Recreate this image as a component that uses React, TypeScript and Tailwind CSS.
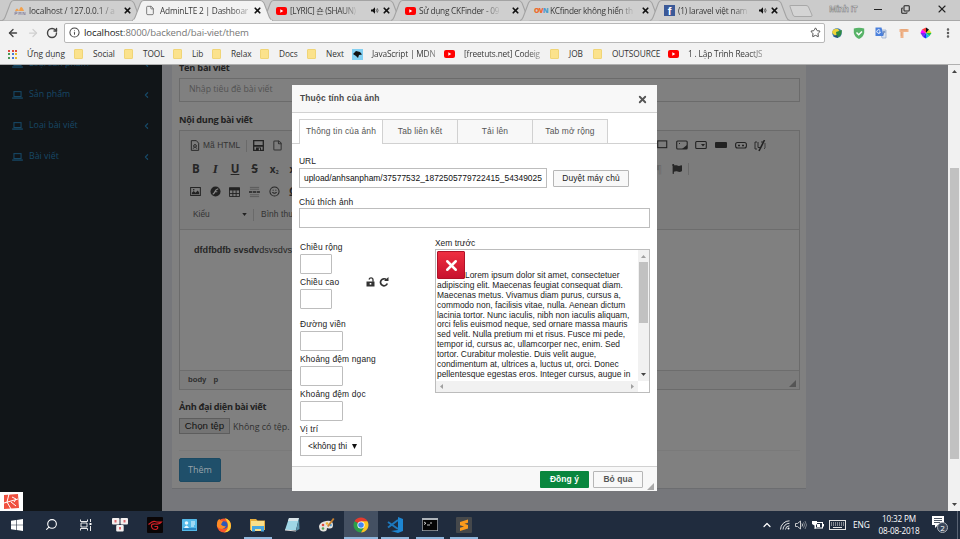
import type { ReactNode } from 'react';
import { X, Info, Star, MoreVertical, ChevronLeft, ArrowLeft, ArrowRight, RotateCw, File, Image, Smile, Search, ChevronUp, Copy } from 'lucide-react';
import { FaFlag } from 'react-icons/fa';

const UI = "font-['Open_Sans','Noto_Sans_CJK_KR',sans-serif]";

function YouTube() {
  return (
    <svg viewBox="0 0 11 8" className="h-[8px] w-[11px] shrink-0">
      <rect width="11" height="8" rx="2" fill="#f00" />
      <path d="M4.3 2.2v3.6L7.3 4z" fill="#fff" />
    </svg>
  );
}

function Speaker() {
  return (
    <svg viewBox="0 0 10 8" className="h-[7px] w-[8px] shrink-0">
      <path d="M0 2.6h2L5 0v8L2 5.4H0z" fill="#111" />
      <path d="M6.3 2.3q1.3 1.7 0 3.4M7.8 1.2q2 2.800 0 5.600" fill="none" stroke="#333" strokeWidth=".9" />
    </svg>
  );
}

function Folder() {
  return <span className="h-[10px] w-[9px] shrink-0 rounded-[1px] border border-[#f0d577] bg-[#fbe28c]" />;
}

function Tab({ className, icon, title, titleClass, active, sound }: { className: string; icon: ReactNode; title: string; titleClass: string; active?: boolean; sound?: boolean }) {
  return (
    <div className={`relative flex h-[21px] shrink-0 items-center ${className}`}>
      <svg viewBox="0 0 133 21" preserveAspectRatio="none" className="absolute -left-[5px] top-0 h-[21px] w-[calc(100%+11px)]">
        <path d="M0 20.5Q2 20 3 17L8 3Q9 .5 11 .5H121Q123 .5 124.500 3L129.500 17Q130.500 20 133 20.500" fill={active ? '#f2f2f2' : '#cfcfcf'} stroke="#a3a3a3" strokeWidth="1" />
        {active && <path d="M1 20.500H132" stroke="#f2f2f2" strokeWidth="1.500" />}
      </svg>
      <div className="relative flex w-full items-center pl-[9px]">
        <span className="flex w-[14px] shrink-0">{icon}</span>
        <span className={`whitespace-nowrap bg-gradient-to-r from-[#333] from-80% to-[#bbb] bg-clip-text text-[8.300px] leading-[14px] text-transparent ${titleClass}`}>{title}</span>
        <span className="ml-auto flex items-center gap-[3px] pr-[5px]">
          {sound && <Speaker />}
          <X className="h-[9px] w-[9px] text-[#111]" strokeWidth={4.500} />
        </span>
      </div>
    </div>
  );
}

function TabStrip() {
  return (
    <div className="relative flex h-[21px] border-b border-[#a8a8a8] bg-[#cbcbcb] pl-[7px]">
      <Tab
        className="w-[130px]"
        icon={
          <svg viewBox="0 0 12 11" className="-ml-[2px] h-[11px] w-[12px]">
            <path d="M1 6Q3 1 5 6ZM5 6Q7-2 10 6Z" fill="#f2a04b" />
            <path d="M1 10V7h2v1.500H1M5 10V7l1 1.500L7 7v3M9 10V7l2 3V7" stroke="#8b86a0" fill="none" strokeWidth=".8" />
          </svg>
        }
        title="localhost / 127.0.0.1 / a"
        titleClass="-ml-[1px] tracking-[-0.130px]"
      />
      <Tab className="z-10 w-[130px]" active icon={<File className="-ml-[1px] h-[11px] w-[10px] text-[#666]" strokeWidth={2} />} title="AdminLTE 2 | Dashboar" titleClass="tracking-[-0.200px]" />
      <Tab className="w-[129px]" icon={<YouTube />} title="[LYRIC] 숀 (SHAUN)" titleClass="tracking-[-0.380px]" sound />
      <Tab className="w-[129px]" icon={<YouTube />} title="Sử dụng CKFinder - 09" titleClass="tracking-[-0.250px]" />
      <Tab
        className="w-[130px]"
        icon={<span className="flex text-[7px] font-black leading-none tracking-[-0.800px]"><b className="text-[#ee6a2c]">OV</b><b className="text-[#4a9dcc]">N</b></span>}
        title="KCfinder không hiển th"
        titleClass="ml-[2px] tracking-[-0.280px]"
      />
      <Tab
        className="w-[129px]"
        icon={<span className="flex h-[11px] w-[11px] items-end justify-center bg-[#3b5998] font-['Liberation_Sans',sans-serif] text-[11px] font-bold leading-[10px] text-white">f</span>}
        title="(1) laravel việt nam"
        titleClass="tracking-[-0.180px]"
        sound
      />
      <svg viewBox="0 0 24 12" className="ml-[5px] mt-[5px] h-[12px] w-[24px]">
        <path d="M1 1.500Q0 .5 2 .5h15q2 0 2.500 1.500L23 10q.5 1.500-1 1.500H6q-1.500 0-2-1.500Z" fill="#d4d4d4" stroke="#a8a8a8" />
      </svg>
      <div className="ml-[16px] mt-[2px] w-[40px] text-[8.300px] font-bold leading-[14px] tracking-[-0.400px] text-[#e6e6e6] [-webkit-text-stroke:0.500px_#777]">Minh IT</div>
      <span className="ml-[5px] mt-[9px] h-px w-[8px] bg-[#222]" />
      <Copy className="ml-[19px] mt-[5px] h-[9px] w-[9px] -scale-x-100 rotate-180 text-[#222]" strokeWidth={2.800} />
      <X className="ml-[26px] mt-[3px] h-[12px] w-[12px] text-[#222]" strokeWidth={2.200} />
    </div>
  );
}

function AddressBar() {
  return (
    <div className="flex h-[23px] items-center bg-[#f2f2f2] pl-[7px]">
      <ArrowLeft className="h-[12px] w-[12px] shrink-0 text-[#444]" strokeWidth={2.800} />
      <ArrowRight className="ml-[8px] h-[12px] w-[12px] shrink-0 text-[#d0d0d0]" strokeWidth={2.500} />
      <RotateCw className="ml-[7px] h-[12px] w-[12px] shrink-0 text-[#444]" strokeWidth={2.800} />
      <div className="ml-[6px] flex h-[20px] w-[761px] shrink-0 items-center rounded-[2px] border border-[#b8b8b8] bg-white pl-[4px] pr-[3px]">
        <Info className="h-[11px] w-[11px] text-[#444]" strokeWidth={2.200} />
        <span className="ml-[4px] whitespace-nowrap text-[9.600px] leading-[16px] tracking-[-0.130px] text-[#222]">
          localhost<span className="text-[#777]">:8000/backend/bai-viet/them</span>
        </span>
        <Star className="ml-auto h-[11px] w-[11px] text-[#444]" strokeWidth={2} />
      </div>
      <div className="flex h-[12px] shrink-0 items-center">
        <svg viewBox="0 0 12 12" className="ml-[6px] h-[12px] w-[12px]">
          <circle cx="6" cy="6" r="4.800" fill="#3d7ca8" />
          <path d="M1 5Q3 1 7 2L9 5 6 9Q2 8 1 5" fill="#f0d438" />
          <path d="M5 5l6-2-1 5-4 3z" fill="#2f8a3f" />
          <path d="M2 9l4-1 1 3z" fill="#254a78" />
        </svg>
        <svg viewBox="0 0 12 12" className="ml-[10px] h-[12px] w-[12px]">
          <path d="M.8 1.500Q6 0 11.200 1.500V6Q10 10.500 6 12 2 10.500.8 6Z" fill="#58b368" />
          <path d="M3.500 5.500 5.700 7.700 9 4.500" fill="none" stroke="#fff" strokeWidth="1.500" />
        </svg>
        <svg viewBox="0 0 12 12" className="ml-[10px] h-[12px] w-[12px]">
          <path d="M5 3h6v8H7z" fill="#dbe3ef" stroke="#8fa6cf" strokeWidth=".7" />
          <path d="M.5.5h6L8.500 9h-8z" fill="#4a80dc" />
          <path d="M5.200 3.600A1.800 1.800 0 1 0 5.400 5H4" fill="none" stroke="#fff" strokeWidth=".9" />
          <path d="M7.500 5h3M9 4v1l-1 3" stroke="#4a6fae" strokeWidth=".8" fill="none" />
        </svg>
        <svg viewBox="0 0 12 12" className="ml-[11px] h-[12px] w-[12px]">
          <path d="M1.500 2h9v3H5.500v6H2.500V5h-1z" fill="#f0b48a" />
          <path d="M4 2v1.500M6 2v1.500M8 2v1.500M2.500 6H4M2.500 8H4" stroke="#cf8650" strokeWidth=".5" />
        </svg>
        <svg viewBox="0 0 12 12" className="ml-[10px] h-[12px] w-[12px]">
          <path d="M6 6V.5l-4 2z" fill="#ff3d3d" />
          <path d="M6 6 2 2.500.5 6z" fill="#f0f" />
          <path d="M6 6H.5L3 10z" fill="#7a2cf0" />
          <path d="M6 6 3 10l3 1.500z" fill="#22f" />
          <path d="M6 6v5.500L9.500 9z" fill="#19b8e8" />
          <path d="M6 6l3.500 3 2-3z" fill="#1fc04c" />
          <path d="M6 6h5.500L9 2.500z" fill="#d8e020" />
          <path d="M6 6l3-3.500L6 .5z" fill="#111" />
        </svg>
        <MoreVertical className="ml-[10px] h-[12px] w-[12px] text-[#555]" strokeWidth={3} />
      </div>
    </div>
  );
}

const bookmarks: { text: string; className: string; kind: string }[] = [
  { text: 'Social', className: 'w-[50px]', kind: 'folder' },
  { text: 'TOOL', className: 'w-[49px]', kind: 'folder' },
  { text: 'Lib', className: 'w-[39px]', kind: 'folder' },
  { text: 'Relax', className: 'w-[48px]', kind: 'folder' },
  { text: 'Docs', className: 'w-[47px]', kind: 'folder' },
  { text: 'Next', className: 'w-[45px]', kind: 'folder' },
  { text: 'JavaScript | MDN', className: 'w-[92px]', kind: 'mdn' },
  { text: '[freetuts.net] Codeig', className: 'w-[106px]', kind: 'yt' },
  { text: 'JOB', className: 'w-[43px]', kind: 'folder' },
  { text: 'OUTSOURCE', className: 'w-[75px]', kind: 'folder' },
  { text: '1 . Lập Trình ReactJS', className: 'w-[104px]', kind: 'yt' },
];

function Bookmarks() {
  const dots = ['bg-[#e04b3f]', 'bg-[#e04b3f]', 'bg-[#e04b3f]', 'bg-[#4a9a57]', 'bg-[#4a79d8]', 'bg-[#e8b92e]', 'bg-[#4a9a57]', 'bg-[#4a79d8]', 'bg-[#e8b92e]'];
  return (
    <div className="flex h-[21px] items-center border-b border-[#b0b0b0] bg-[#f2f2f2] pl-[8px] text-[8.300px] leading-[14px] text-[#333]">
      <div className="grid w-[9px] grid-cols-3 gap-[1.500px]">
        {dots.map((d, i) => <span key={i} className={`h-[2px] w-[2px] ${d}`} />)}
      </div>
      <span className="ml-[10px] w-[47px] whitespace-nowrap">Ứng dụng</span>
      {bookmarks.map((b) => (
        <span key={b.text} className={`flex shrink-0 items-center whitespace-nowrap ${b.className}`}>
          {b.kind === 'folder' && <Folder />}
          {b.kind === 'yt' && <YouTube />}
          {b.kind === 'mdn' && (
            <svg viewBox="0 0 11 11" className="h-[11px] w-[11px] shrink-0">
              <rect width="11" height="11" fill="#83d0f2" />
              <path d="M1 5 4 2l4 1 2 2.500-3 .5-1 3-2-2z" fill="#111" />
            </svg>
          )}
          <span className={b.kind === 'folder' ? 'ml-[10px] tracking-[-0.080px]' : 'bg-gradient-to-r from-[#333] from-85% to-[#999] bg-clip-text pl-[9px] tracking-[-0.170px] text-transparent'}>{b.text}</span>
        </span>
      ))}
    </div>
  );
}

function LaptopIcon() {
  return (
    <svg viewBox="0 0 12 9" className="h-[8px] w-[11px] shrink-0">
      <rect x="2" y=".7" width="8" height="5.500" fill="none" stroke="currentColor" strokeWidth="1.200" />
      <path d="M0 7.200h12v1.500H0z" fill="currentColor" />
    </svg>
  );
}

function Sidebar() {
  return (
    <aside className="w-[162px] shrink-0 overflow-hidden bg-[#111518] text-[8.800px] text-[#174866]">
      <div className="-mt-[17px]">
        {['Loại sản phẩm', 'Sản phẩm', 'Loại bài viết', 'Bài viết'].map((t) => (
          <div key={t} className="flex h-[31px] items-center pl-[12px] pr-[11px]">
            <LaptopIcon />
            <span className="ml-[6px]">{t}</span>
            <ChevronLeft className="ml-auto h-[10px] w-[9px]" strokeWidth={3.200} />
          </div>
        ))}
      </div>
    </aside>
  );
}

function Cell({ children }: { children?: ReactNode }) {
  return <span className="flex w-[19.600px] shrink-0 justify-center">{children}</span>;
}

function Sep() {
  return <span className="h-[12px] w-px shrink-0 bg-[#6a6a6a]" />;
}

function Editor() {
  return (
    <div className="mt-[4px] flex h-[260px] flex-col border border-[#6b6b6b] font-['Liberation_Sans',sans-serif] text-[#262626]">
      <div className="h-[99px] border-b border-[#6d6d6d] bg-[#7c7c7c] pt-[3px] text-[8.400px]">
        <div className="flex h-[23px] items-center pl-[10px] text-[#333]">
          <svg viewBox="0 0 10 12" className="h-[11px] w-[10px]" fill="none" stroke="#222" strokeWidth="1">
            <path d="M1 .7h5.500L9 3.500v7.800H1z" />
            <circle cx="5" cy="6.500" r="1.500" />
            <path d="M3 9.500 4 8M7 9.500 6 8" />
          </svg>
          <span className="ml-[3px] w-[43px] tracking-[0.080px]">Mã HTML</span>
          <Sep />
          <svg viewBox="0 0 11 11" className="ml-[6px] h-[11px] w-[11px]">
            <path d="M.7.700h9.600v9.600H.7z" fill="none" stroke="#222" strokeWidth="1.300" />
            <path d="M1 5h9v1.800H1zM3 7.500h5V11H3z" fill="#222" />
            <path d="M5.800 8.300h1.200v1.900H5.800z" fill="#888" />
          </svg>
          <File className="ml-[8px] h-[11px] w-[11px]" strokeWidth={2.200} />
          <div className="ml-auto mr-[29px] flex">
            <Cell><svg viewBox="0 0 12 10" className="h-[9px] w-[11px]"><rect x=".7" y="1" width="10" height="7.500" fill="none" stroke="#222" strokeWidth="1.200" /></svg></Cell>
            <Cell><svg viewBox="0 0 12 10" className="h-[10px] w-[12px]"><rect x=".7" y="1" width="10.500" height="8" rx="1" fill="none" stroke="#222" strokeWidth="1.100" /><path d="M3 3h1v1H3zM11 5v4H6z" fill="#222" /></svg></Cell>
            <Cell><svg viewBox="0 0 12 10" className="h-[10px] w-[12px]"><rect x=".7" y="1.500" width="10.600" height="7" rx="1" fill="none" stroke="#222" strokeWidth="1.100" /><path d="M6 4h4L8 6.500z" fill="#222" /></svg></Cell>
            <Cell><span className="mt-[2px] h-[6px] w-[12px] rounded-[1px] bg-[#222]" /></Cell>
            <Cell><svg viewBox="0 0 12 10" className="h-[10px] w-[12px]"><rect x=".6" y="2.500" width="10.800" height="5.500" rx="2" fill="none" stroke="#222" strokeWidth="1.100" /><path d="M3 4.800h2v1.500H3zM7 4.800h2v1.500H7z" fill="#222" /></svg></Cell>
            <Cell><svg viewBox="0 0 12 12" className="h-[12px] w-[12px]" fill="none" stroke="#222"><path d="M3 2H1v7h2M4 2v5.500h2M9 2H7" strokeWidth=".9" /><path d="M10.500 0 5 11" strokeWidth="1.600" /><path d="M11 3v5l-1 1" strokeWidth=".7" /></svg></Cell>
          </div>
        </div>
        <div className="flex h-[23px] items-center pl-[6px] font-['Open_Sans',sans-serif] text-[11.500px] leading-none">
          <Cell><b>B</b></Cell>
          <Cell><b className="font-['Liberation_Serif',serif] text-[13px] italic">I</b></Cell>
          <Cell><b className="underline">U</b></Cell>
          <Cell><b className="line-through">S</b></Cell>
          <Cell><b className="text-[10px]">x<sub className="text-[5px]">2</sub></b></Cell>
          <Cell><b className="text-[10px]">x<sup className="text-[5px]">2</sup></b></Cell>
          <span className="ml-auto mr-[110px] flex items-center">
            <span className="mr-[10px] text-[10px] text-[#666]">¶</span>
            <FaFlag className="mr-[6px] h-[10px] w-[10px]" />
            <Sep />
          </span>
        </div>
        <div className="flex h-[23px] items-center pl-[6px]">
          <Cell>
            <svg viewBox="0 0 12 10" className="h-[9px] w-[11px]">
              <rect x=".6" y=".6" width="10.800" height="8.800" fill="none" stroke="#222" strokeWidth="1.100" />
              <path d="M2 8V6.500L4 4.500 6 6.500 8.500 4 10 6v2z" fill="#222" /><circle cx="4" cy="3" r=".9" fill="#222" />
            </svg>
          </Cell>
          <Cell>
            <svg viewBox="0 0 12 12" className="h-[11px] w-[11px]">
              <circle cx="6" cy="6" r="5.500" fill="#222" />
              <path d="M3 9Q5 8 5.500 6T9 3M5 6.300h3" stroke="#888" strokeWidth="1.300" fill="none" />
            </svg>
          </Cell>
          <Cell>
            <svg viewBox="0 0 12 11" className="h-[10px] w-[11px]">
              <path d="M.5 1h11v9.500H.5zM.5 7.200h11M4.200 3.500v7M7.800 3.500v7" fill="none" stroke="#222" strokeWidth="1" /><path d="M0 .5h12V3.800H0z" fill="#222" />
            </svg>
          </Cell>
          <Cell>
            <svg viewBox="0 0 12 12" className="h-[12px] w-[11px]"><path d="M1 1h10M1 3h10M1 9h10M1 11h10" stroke="#555" strokeWidth=".9" /><path d="M0 6h12" stroke="#222" strokeWidth="1.600" strokeDasharray="3.500 .7" /></svg>
          </Cell>
          <Cell><Smile className="h-[11px] w-[11px]" strokeWidth={2.200} /></Cell>
          <Cell><span className="text-[12px] font-bold leading-none">Ω</span></Cell>
        </div>
        <div className="flex h-[23px] items-center pl-[13px] text-[#333]">
          <span className="w-[49px]">Kiểu</span>
          <svg viewBox="0 0 6 4" className="h-[3px] w-[5px]"><path d="M0 0h6L3 4z" fill="#222" /></svg>
          <span className="ml-[6px] mr-[7px] flex"><Sep /></span>
          <span className="tracking-[0.100px]">Bình thường</span>
        </div>
      </div>
      <div className="grow px-[14px] pt-[13px] text-[9.100px] leading-[14px] text-[#262626]"><b>dfdfbdfb svsdv</b>dsvsdvsdv</div>
      <div className="flex h-[19px] items-center gap-[7px] border-t border-[#6d6d6d] bg-[#7c7c7c] pl-[8px] text-[7.700px] font-bold text-[#2e2e2e]">
        <span>body</span><span>p</span>
        <Grip className="ml-auto mr-[3px] mt-[6px] h-[7px] w-[7px] text-[#555]" />
      </div>
    </div>
  );
}

function Grip({ className }: { className: string }) {
  return <svg viewBox="0 0 7 7" className={className}><path d="M7 0v7H0z" fill="currentColor" /></svg>;
}

function PageForm() {
  return (
    <main className="min-w-0 grow overflow-hidden bg-[#76777b] pl-[10px]">
      <div className="h-[428px] w-[634px] border-b border-[#6c6d70] bg-[#808080] pl-[7px] pr-[6px] text-[9.200px]">
        <div className="-mt-[4px] h-[17px] font-bold leading-[14px] tracking-[-0.220px] text-[#222]">Tên bài viết</div>
        <div className="flex h-[24px] items-center border border-[#6b6b6b] pl-[9px] text-[8.700px] text-[#525252]">Nhập tiêu đề bài viết</div>
        <div className="mt-[11px] h-[13px] font-bold leading-[14px] tracking-[-0.260px] text-[#222]">Nội dung bài viết</div>
        <Editor />
        <div className="mt-[10px] font-bold leading-[14px] tracking-[-0.330px] text-[#222]">Ảnh đại diện bài viết</div>
        <div className="mt-[4px] flex h-[16px] items-center">
          <span className="flex h-[16px] w-[51px] items-center justify-center border border-[#5d5d5d] bg-[#747474] font-['Liberation_Sans',sans-serif] text-[9.700px] text-[#111]">Chọn tệp</span>
          <span className="ml-[3px] pt-[1px] text-[8.900px] text-[#303030]">Không có tệp.</span>
        </div>
        <div className="mt-[16px] h-px bg-[#7a7a7a]" />
        <div className="mt-[7px] flex h-[24px] w-[42px] items-center justify-center rounded-[2px] border border-[#1b4a63] bg-[#1f4f6a] text-[9px] text-[#99a3a9]">Thêm</div>
      </div>
    </main>
  );
}

function Field({ label, className }: { label: string; className: string }) {
  return (
    <div className="h-[35px]">
      <div className="h-[13px] whitespace-nowrap leading-[12px] tracking-[0.150px]">{label}</div>
      <div className={`h-[20px] rounded-[1px] border border-[#bdbdbd] bg-white ${className}`} />
    </div>
  );
}

function Preview() {
  return (
    <div className="w-[215px] pt-[4px]">
      <div className="h-[11px] leading-[11px]">Xem trước</div>
      <div className="flex h-[144px] w-[215px] border border-[#bcbcbc]">
        <div className="flex w-[202px] flex-col">
          <div className="h-[131px] overflow-hidden whitespace-nowrap pl-[1px] pt-[1px] leading-[9.850px]">
            <div className="flex items-end">
              <span className="flex h-[28px] w-[28px] items-center justify-center rounded-[1px] border border-[#b01228] bg-gradient-to-b from-[#ee2e40] to-[#c8102e] text-white">
                <X className="h-[17px] w-[17px]" strokeWidth={3.500} />
              </span>
              <span className="translate-y-[2px]">Lorem ipsum dolor sit amet, consectetuer</span>
            </div>
            {[
              'adipiscing elit. Maecenas feugiat consequat diam.',
              'Maecenas metus. Vivamus diam purus, cursus a,',
              'commodo non, facilisis vitae, nulla. Aenean dictum',
              'lacinia tortor. Nunc iaculis, nibh non iaculis aliquam,',
              'orci felis euismod neque, sed ornare massa mauris',
              'sed velit. Nulla pretium mi et risus. Fusce mi pede,',
              'tempor id, cursus ac, ullamcorper nec, enim. Sed',
              'tortor. Curabitur molestie. Duis velit augue,',
              'condimentum at, ultrices a, luctus ut, orci. Donec',
              'pellentesque egestas eros. Integer cursus, augue in',
            ].map((l) => <div key={l} className="translate-y-[1.500px]">{l}</div>)}
          </div>
          <div className="flex h-[11px] items-center justify-between bg-[#f1f1f1] px-[4px]">
            <svg viewBox="0 0 3 5" className="h-[5px] w-[3px]"><path d="M3 0v5L0 2.500z" fill="#a0a0a0" /></svg>
            <svg viewBox="0 0 3 5" className="h-[5px] w-[3px]"><path d="M0 0v5l3-2.500z" fill="#a0a0a0" /></svg>
          </div>
        </div>
        <div className="flex h-[131px] w-[11px] flex-col items-center bg-[#f1f1f1]">
          <svg viewBox="0 0 5 3" className="mt-[5px] h-[3px] w-[5px]"><path d="M0 3h5L2.500 0z" fill="#a0a0a0" /></svg>
          <span className="mt-[4px] h-[61px] w-[9px] bg-[#c1c1c1]" />
          <svg viewBox="0 0 5 3" className="mb-[5px] mt-auto h-[3px] w-[5px]"><path d="M0 0h5L2.500 3z" fill="#444" /></svg>
        </div>
      </div>
    </div>
  );
}

function Dialog() {
  return (
    <div className="absolute left-[292px] top-[20px] flex h-[406px] w-[365px] flex-col bg-white font-['Liberation_Sans',sans-serif] text-[8.430px] text-[#222]">
      <div className="flex h-[28px] shrink-0 items-center justify-between border-b border-[#d1d1d1] bg-[#f8f8f8] pl-[8px] pr-[9px]">
        <span className="font-bold tracking-[0.130px] text-[#484848]">Thuộc tính của ảnh</span>
        <X className="mt-[1px] h-[11px] w-[11px] text-[#555]" strokeWidth={4} />
      </div>
      <div className="flex h-[31px] shrink-0 items-end border-b border-[#d1d1d1] pl-[7px] tracking-[0.150px]">
        <span className="-mb-px flex h-[25px] w-[84px] items-center justify-center border border-b-0 border-[#d1d1d1] bg-white pb-[1px] text-[#555]">Thông tin của ảnh</span>
        {['Tab liên kết', 'Tải lên', 'Tab mở rộng'].map((t) => (
          <span key={t} className="flex h-[24px] w-[75px] items-center justify-center border-r border-t border-[#d1d1d1] bg-[#f8f8f8] text-[#555]">{t}</span>
        ))}
      </div>
      <div className="grow pl-[7px] pr-[7px] pt-[11px]">
        <div className="h-[13px] leading-[12px]">URL</div>
        <div className="flex items-start">
          <div className="flex h-[20px] w-[248px] items-center overflow-hidden whitespace-nowrap border border-[#bdbdbd] pl-[4px] text-[#111]">upload/anhsanpham/37577532_1872505779722415_54349025</div>
          <div className="ml-[6px] mt-[2px] flex h-[17px] w-[76px] items-center justify-center rounded-[1px] border border-[#b6b6b6] bg-[#f8f8f8] tracking-[0.100px] text-[#222]">Duyệt máy chủ</div>
        </div>
        <div className="mt-[8px] h-[12px] leading-[12px] tracking-[0.150px]">Chú thích ảnh</div>
        <div className="h-[20px] border border-[#bdbdbd]" />
        <div className="flex justify-between pl-[1px] pt-[6px]">
          <div className="pt-[7px]">
            <Field label="Chiều rộng" className="w-[32px]" />
            <div className="flex">
              <div className="w-[66px]"><Field label="Chiều cao" className="w-[32px]" /></div>
              <svg viewBox="0 0 9 10" className="mt-[1px] h-[10px] w-[9px]"><path d="M0.500 4.500h8v5h-8z" fill="#333" /><path d="M3 2.500Q3.500 .8 5 .8q2 0 2 2v2" fill="none" stroke="#333" strokeWidth="1.300" /><rect x="3.700" y="6" width="1.600" height="1.600" fill="#fff" /></svg>
              <svg viewBox="0 0 10 10" className="ml-[4px] mt-[1px] h-[10px] w-[10px]"><path d="M7.500 2.800A3.500 3.500 0 1 0 8.300 6.500" fill="none" stroke="#333" strokeWidth="1.700" /><path d="M5 4h4.500V0z" fill="#333" /></svg>
            </div>
            <div className="mt-[7px]" />
            <Field label="Đường viền" className="w-[43px]" />
            <Field label="Khoảng đệm ngang" className="w-[43px]" />
            <Field label="Khoảng đệm dọc" className="w-[43px]" />
            <div className="h-[13px] leading-[12px] tracking-[0.150px]">Vị trí</div>
            <div className="flex h-[20px] w-[62px] items-center justify-between border border-[#bdbdbd] pl-[7px] pr-[4px]">
              <span>&lt;không thi</span>
              <svg viewBox="0 0 5 5" className="h-[5px] w-[5px]"><path d="M0 0h5L2.500 5z" fill="#111" /></svg>
            </div>
          </div>
          <Preview />
        </div>
      </div>
      <div className="flex h-[25px] shrink-0 items-center justify-end border-t border-[#d1d1d1] bg-[#f8f8f8] font-bold tracking-[0.100px]">
        <span className="flex h-[17px] w-[49px] items-center justify-center rounded-[1px] bg-[#09863e] text-white">Đồng ý</span>
        <span className="ml-[4px] flex h-[17px] w-[50px] items-center justify-center rounded-[1px] border border-[#b6b6b6] text-[#555]">Bỏ qua</span>
        <Grip className="ml-[4px] mr-[3px] mt-[14px] h-[7px] w-[7px] text-[#aaa]" />
      </div>
    </div>
  );
}

function PageScrollbar() {
  return (
    <div className="flex w-[12px] shrink-0 flex-col items-center bg-[#f1f1f1]">
      <svg viewBox="0 0 5 3" className="mt-[5px] h-[3px] w-[5px]"><path d="M0 3h5L2.500 0z" fill="#444" /></svg>
      <span className="mt-[95px] h-[291px] w-[9px] bg-[#c1c1c1]" />
      <svg viewBox="0 0 5 3" className="mb-[5px] mt-auto h-[3px] w-[5px]"><path d="M0 0h5L2.500 3z" fill="#444" /></svg>
    </div>
  );
}

function Slot({ children, open, active }: { children: ReactNode; open?: boolean; active?: boolean }) {
  return (
    <span className={`flex h-[28px] w-[34.400px] shrink-0 flex-col items-center ${active ? 'bg-[#445062]' : ''}`}>
      <span className="flex h-[26px] items-center pt-[1px]">{children}</span>
      {open && <span className={`h-[2px] bg-[#8fb6dc] ${active ? 'w-full' : 'w-[28px]'}`} />}
    </span>
  );
}

function Taskbar() {
  return (
    <footer className="flex h-[28px] bg-[#202c3e] text-white">
      <Slot><svg viewBox="0 0 12 12" className="h-[12px] w-[12px]"><path d="M0 1.700 5 1v4.700H0zM5.600.9 12 0v5.700H5.600zM0 6.300h5V11L0 10.300zM5.600 6.300H12V12l-6.400-.9z" fill="#fff" /></svg></Slot>
      <Slot><Search className="h-[13px] w-[13px] -scale-x-100" strokeWidth={2} /></Slot>
      <Slot>
        <svg viewBox="0 0 12 12" className="h-[12px] w-[12px]" fill="none" stroke="#e8e8e8"><path d="M.5.500v2h7v-2M.500 11.500v-2h7v2M1 4h6v4H1zM10.500 0v3M10.500 7v5" /><path d="M9.500 4h2v2h-2z" fill="#fff" stroke="none" /></svg>
      </Slot>
      <Slot>
        <svg viewBox="0 0 16 14" className="h-[14px] w-[16px]">
          <rect width="7.500" height="6.500" rx="1" fill="#f4f0ef" /><rect x="8.500" width="7.500" height="6.500" rx="1" fill="#f4f0ef" /><rect x="4.200" y="7" width="7.500" height="6.500" rx="1" fill="#f4f0ef" />
          <path d="M2.500 2h2v2.500h-2zM11.500 2h2v2.500h-2zM7 9h2v2.500H7z" fill="#e06a70" />
        </svg>
      </Slot>
      <Slot>
        <svg viewBox="0 0 16 16" className="h-[16px] w-[16px]"><rect width="16" height="16" rx="1" fill="#0a0506" /><path d="M1.500 7.500Q6 3.500 8 4.500T14.500 5Q13 7.500 8.500 7T4.500 9.500 9 12.500Q11.500 11.500 10.500 9.500H7.500" fill="none" stroke="#d32027" strokeWidth="1.200" /></svg>
      </Slot>
      <Slot>
        <svg viewBox="0 0 15 12" className="h-[12px] w-[15px]"><rect width="15" height="12" rx=".5" fill="#54b9e8" /><path d="M1 9h13v2H1z" fill="#2b87c4" /><circle cx="4.500" cy="4" r="1.800" fill="#e8f8ff" /><path d="M2 9Q4.500 4 7 9z" fill="#e8f8ff" /><path d="M9 3h4M9 5h4M9 7h3" stroke="#e8f8ff" /></svg>
      </Slot>
      <Slot>
        <svg viewBox="0 0 16 16" className="h-[16px] w-[16px]">
          <circle cx="8" cy="8.500" r="7" fill="#f5552d" />
          <path d="M9 1Q15 3 15 9T8 15.500Q12 13 12 9T9 1" fill="#ffcb35" />
          <circle cx="7.800" cy="8" r="3.800" fill="#2d59b8" />
          <path d="M1 7Q1 3 3.500 2 4 4 7 4L5 7.500Q7 10 10 9 8 13 4 11.500T1 7" fill="#ff8b24" />
        </svg>
      </Slot>
      <Slot open>
        <svg viewBox="0 0 16 14" className="h-[14px] w-[16px]"><path d="M0 1h6l1.500 1.500H15V12H0z" fill="#e8ae3c" /><path d="M1 3h13v10H1z" fill="#fbe08a" /><path d="M2 8h12v5.500h-3V11H5v2.500H2z" fill="#4aa8e0" /></svg>
      </Slot>
      <Slot>
        <svg viewBox="0 0 16 15" className="h-[15px] w-[16px]"><path d="M5 1h10l-3 12H1z" fill="#9fd6e6" /><path d="M5 1h10l-1 3H4z" fill="#d9e4e8" /><path d="m15 1 .5 11-3.500 2z" fill="#5d97ae" /><path d="m1 13 11 1" stroke="#ddd" /></svg>
      </Slot>
      <Slot>
        <svg viewBox="0 0 17 16" className="h-[16px] w-[17px]"><path d="M8 4Q15 3 15 8T9 11Q9 15 5 14.500T1 9Q2 5 8 4" fill="#e6e3de" /><circle cx="5" cy="8" r="1.300" fill="#e14b3b" /><circle cx="9" cy="6.500" r="1.300" fill="#efb52d" /><circle cx="12.500" cy="8" r="1.300" fill="#4e9bd6" /><circle cx="5" cy="11.500" r="1.300" fill="#58a65c" /><path d="m9 9 6-8 1.500 1-6 8z" fill="#c9822f" /></svg>
      </Slot>
      <Slot open active>
        <svg viewBox="0 0 16 16" className="h-[16px] w-[16px]">
          <path d="M8 8 1.500 4.300A7.500 7.500 0 0 1 14.500 4.300z" fill="#e33b2e" />
          <path d="M8 8 1.500 4.300A7.500 7.500 0 0 0 8 15.500L11 9.700z" fill="#2c9f48" />
          <path d="M8 4.300h6.500A7.500 7.500 0 0 1 8 15.500L11.200 10z" fill="#fcc722" />
          <circle cx="8" cy="8" r="3.600" fill="#fff" /><circle cx="8" cy="8" r="2.800" fill="#4285f4" />
        </svg>
      </Slot>
      <Slot open>
        <svg viewBox="0 0 16 16" className="h-[16px] w-[16px]"><path d="M11 0 16 2v12l-5 2-7-2 7-1z" fill="#1d86d2" /><path d="M1 5l10 7M1 10.500 11 3" stroke="#1d78bd" strokeWidth="2" /></svg>
      </Slot>
      <Slot open>
        <svg viewBox="0 0 16 13" className="h-[13px] w-[16px]"><rect width="16" height="13" fill="#aeb4ba" /><rect x=".7" y="2" width="14.600" height="10.300" fill="#050505" /><path d="m2 4 2 1.300L2 6.500M5 7h3M8 5h2" stroke="#ddd" strokeWidth=".9" fill="none" /></svg>
      </Slot>
      <Slot open>
        <svg viewBox="0 0 16 16" className="h-[16px] w-[16px]"><rect width="16" height="16" rx="1" fill="#45484b" /><path d="M12 2.500 4 5v3.300l4 1.200-4 1.300V14l8-2.600V8L8.500 6.800 12 5.700z" fill="#fb9a1c" /></svg>
      </Slot>
      <div className={`ml-auto flex items-center text-[8.400px] ${UI}`}>
        <ChevronUp className="h-[12px] w-[12px]" strokeWidth={2.400} />
        <svg viewBox="0 0 10 10" className="ml-[7px] h-[10px] w-[10px]" fill="none" stroke="#ddd" strokeWidth="1">
          <path d="M.5 9.500A9 9 0 0 1 9.500.8M3 9.500A6.500 6.500 0 0 1 9.500 3.300M5.500 9.500A4 4 0 0 1 9.500 5.800" /><circle cx="8.500" cy="8.500" r="1" fill="#fff" stroke="none" />
        </svg>
        <svg viewBox="0 0 12 10" className="ml-[5px] h-[10px] w-[12px]" fill="none" stroke="#ddd" strokeWidth=".9">
          <path d="M.5 3.500h2L5.500 1v8L2.500 6.500h-2z" /><path d="M7 3.500q1 1.500 0 3" /><path d="M8.500 2.300q2 2.700 0 5.400M10 1q3 4 0 8" opacity=".55" />
        </svg>
        <svg viewBox="0 0 12 10" className="ml-[5px] h-[10px] w-[12px]">
          <rect x="3.500" y="2.500" width="7" height="5.500" fill="none" stroke="#fff" /><path d="M11 4h1v2.500h-1zM5 4h3v3H5z" fill="#fff" /><path d="M0 1h5v3L3.500 5.500V9h-1V5.500L0 4z" fill="#fff" />
        </svg>
        <svg viewBox="0 0 17 10" className="ml-[5px] h-[10px] w-[17px]" fill="none" stroke="#e4e4e4"><rect x=".5" y=".5" width="16" height="9" /><path d="M2 3h13M2 5h13" strokeDasharray="1 1" /><path d="M4 7.500h9" /></svg>
        <span className="ml-[7px] w-[17px] tracking-[-0.100px]">ENG</span>
        <span className="ml-[7px] w-[44px] whitespace-nowrap text-center text-[8.200px] leading-[12.500px] tracking-[-0.170px]">10:32 PM<br />08-08-2018</span>
        <span className="relative ml-[11px] flex h-[20px] w-[18px]">
          <svg viewBox="0 0 12 12" className="mt-[1px] h-[12px] w-[12px]"><path d="M0 0h12v9H6l-3 3V9H0z" fill="#fff" /><path d="M2 2.500h8M2 4.500h8M2 6.500h6" stroke="#202c3e" strokeWidth=".8" /></svg>
          <span className="absolute left-[5px] top-[7px] flex h-[11px] w-[11px] items-center justify-center rounded-full border border-[#aab0b8] bg-[#39465a] text-[8px] leading-none">2</span>
        </span>
        <span className="ml-[7px] mr-[2px] h-[28px] w-px bg-[#596373]" />
      </div>
    </footer>
  );
}

export default function App() {
  return (
    <div className={`h-[539px] w-[960px] overflow-hidden ${UI}`}>
      <TabStrip />
      <AddressBar />
      <Bookmarks />
      <div className="relative flex h-[446px] overflow-hidden">
        <Sidebar />
        <PageForm />
        <PageScrollbar />
        <Dialog />
        <div className="absolute bottom-0 left-0 flex h-[19px] w-[23px] items-center justify-center bg-white">
          <svg viewBox="0 0 15 15" className="h-[15px] w-[15px]"><path d="M0 1 14 0l1 14-15 1z" fill="#f0503f" /><path d="M0 9 14 5M5 0 3 8l4 7M8 3l4 2-2 3M7 8l5 4" stroke="#fff" strokeWidth="1" fill="none" /></svg>
        </div>
      </div>
      <Taskbar />
    </div>
  );
}
